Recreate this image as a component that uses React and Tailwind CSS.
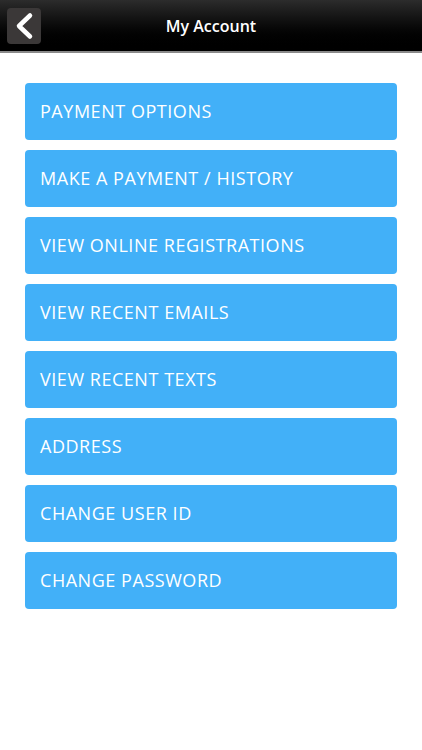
import React from 'react';

const items = [
  'PAYMENT OPTIONS',
  'MAKE A PAYMENT / HISTORY',
  'VIEW ONLINE REGISTRATIONS',
  'VIEW RECENT EMAILS',
  'VIEW RECENT TEXTS',
  'ADDRESS',
  'CHANGE USER ID',
  'CHANGE PASSWORD',
];

export default function App() {
  return (
    <div className="w-[422px] h-[750px] bg-white font-['Open_Sans',sans-serif]">
      {/* top bar */}
      <div className="relative h-[53px] bg-gradient-to-b from-[#2c2c2c] to-[#000] border-b-2 border-[#8a8a8a] flex items-center justify-center">
        <button className="absolute left-[7px] top-[8px] w-[34px] h-[36px] rounded-[4px] bg-[#3b3838] flex items-center justify-center">
          <svg width="20" height="28" viewBox="0 0 20 28">
            <path d="M16 3.5 L5 14 L16 24.5" fill="none" stroke="#fff" strokeWidth="4.5" strokeLinecap="round" strokeLinejoin="round" />
          </svg>
        </button>
        <h1 className="text-white text-[16px] font-semibold">My Account</h1>
      </div>

      {/* menu */}
      <div className="px-[25px] pt-[30px] flex flex-col gap-[10px]">
        {items.map((label) => (
          <button
            key={label}
            className="h-[57px] rounded-[4px] bg-[#42b0f8] text-white text-left pl-[15px] text-[18px] tracking-[0.03em]"
          >
            {label}
          </button>
        ))}
      </div>
    </div>
  );
}
